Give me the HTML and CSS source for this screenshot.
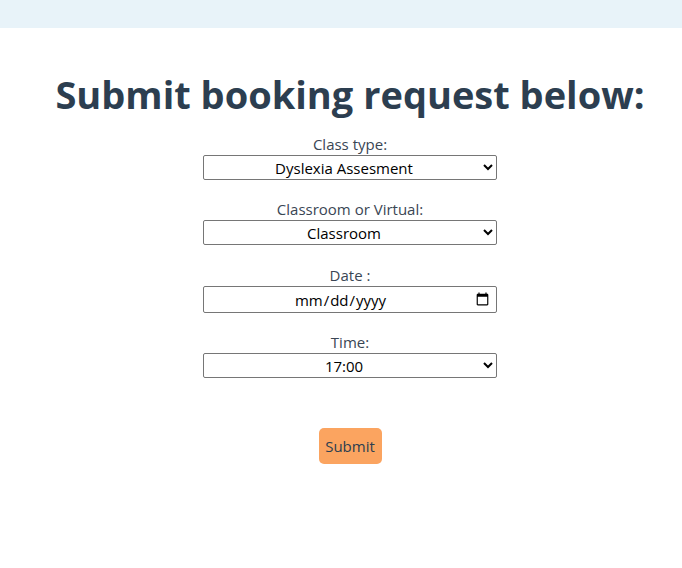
FILE: index.html
```html
<!DOCTYPE html>
<html lang="en">
<head>
<meta charset="utf-8">
<title>Booking</title>
<link rel="stylesheet" href="styles.css">
</head>
<body>
<div class="topbar"></div>
<main class="page">
  <h1 class="title">Submit booking request below:</h1>
  <form class="booking">
    <div class="field">
      <label class="label" for="type">Class type:</label>
      <select id="type" class="control">
        <option>Dyslexia Assesment</option>
      </select>
    </div>
    <div class="field field-wide">
      <label class="label" for="mode">Classroom or Virtual:</label>
      <select id="mode" class="control">
        <option>Classroom</option>
        <option>Virtual</option>
      </select>
    </div>
    <div class="field">
      <label class="label" for="date">Date :</label>
      <input id="date" class="control control-date" type="date">
    </div>
    <div class="field">
      <label class="label" for="time">Time:</label>
      <select id="time" class="control">
        <option>17:00</option>
      </select>
    </div>
    <button type="button" class="submit">Submit</button>
  </form>
</main>
</body>
</html>
```
FILE: styles.css
```css
html, body {
  margin: 0;
  padding: 0;
  background: #ffffff;
}

body {
  font-family: "Open Sans", "Noto Sans", sans-serif;
  color: #2c3e50;
}

.topbar {
  height: 28px;
  background: #e8f3f9;
}

.page {
  padding-left: 18px;
  text-align: center;
}

.title {
  margin: 40px 0 13px;
  font-size: 38px;
  font-weight: 700;
  line-height: 52px;
  color: #2c3e50;
}

.booking {
  display: flex;
  flex-direction: column;
  align-items: center;
}

.field {
  display: flex;
  flex-direction: column;
  align-items: center;
  margin-bottom: 18px;
}

.field-wide {
  margin-bottom: 19px;
}

.label {
  font-size: 15px;
  line-height: 22px;
  color: #3a4654;
}

.control {
  box-sizing: border-box;
  width: 294px;
  height: 25px;
  margin: 0;
  border: 1px solid #767676;
  border-radius: 2px;
  background: #ffffff;
  font-family: "Open Sans", "Noto Sans", sans-serif;
  font-size: 15px;
  color: #000000;
  text-align: center;
  text-align-last: center;
}

.control-date {
  height: 27px;
  padding: 0 4px;
}

.submit {
  margin-top: 32px;
  width: 63px;
  height: 36px;
  border: none;
  border-radius: 5px;
  background: #fba460;
  font-family: "Open Sans", "Noto Sans", sans-serif;
  font-size: 15px;
  color: #2c3e50;
  padding: 0;
  cursor: pointer;
}
```
